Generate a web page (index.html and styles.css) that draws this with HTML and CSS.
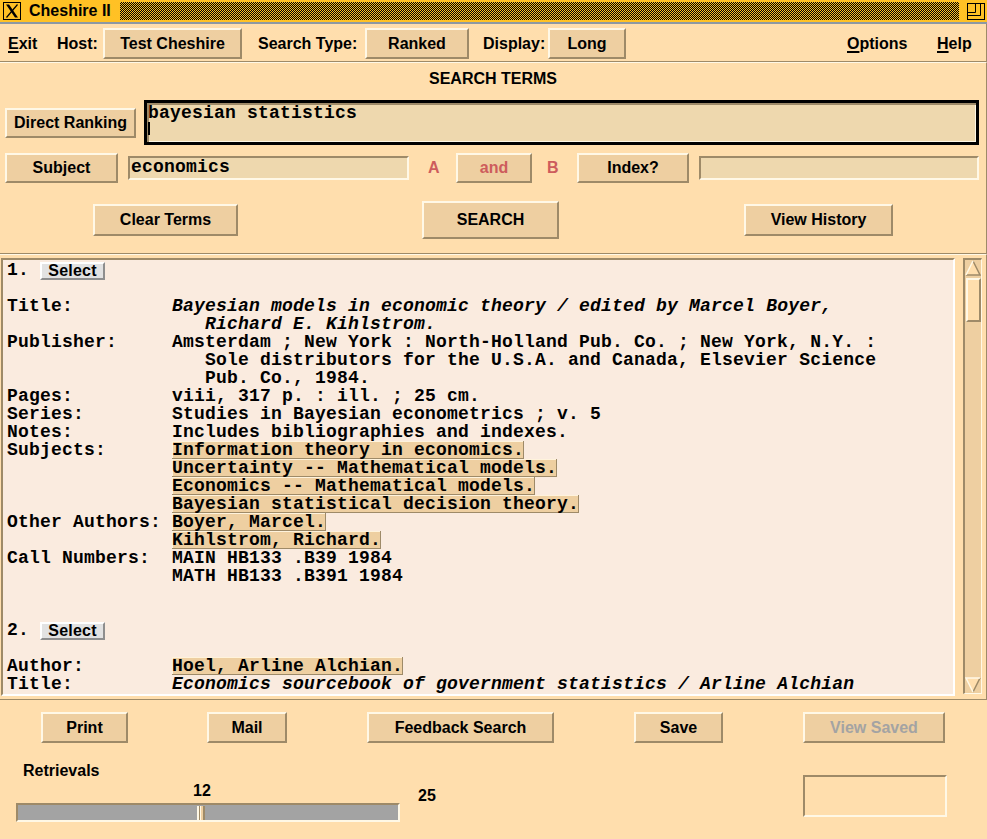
FILE: index.html
```html
<!DOCTYPE html>
<html>
<head>
<meta charset="utf-8">
<title>Cheshire II</title>
<link rel="stylesheet" href="styles.css">
</head>
<body>
<div class="titlebar">
  <svg class="wm-icon" width="18" height="18" viewBox="0 0 18 18">
    <rect x="0.5" y="0.5" width="17" height="17" fill="none" stroke="#000"/>
    <path d="M3 2.5 L6 2.5 L15 15.5 L12 15.5 Z" fill="#000"/>
    <path d="M14.5 2.5 L3.5 15.5" stroke="#000" stroke-width="1.2"/>
  </svg>
  <span class="title">Cheshire II</span>
  <div class="dither"></div>
  <svg class="max-icon" width="18" height="17" viewBox="0 0 18 17">
    <rect x="0.5" y="0.5" width="17" height="16" fill="none" stroke="#000"/>
    <path d="M8.5 0.5 V9.5 H0.5 M13.5 0.5 V12.5 H0.5" fill="none" stroke="#000"/>
  </svg>
</div>

<div class="menubar">
  <span class="m-exit"><u>E</u>xit</span>
  <span class="m-host">Host:</span>
  <button class="btn b-host">Test Cheshire</button>
  <span class="m-stype">Search Type:</span>
  <button class="btn b-ranked">Ranked</button>
  <span class="m-display">Display:</span>
  <button class="btn b-long">Long</button>
  <span class="spacer"></span>
  <span class="m-options"><u>O</u>ptions</span>
  <span class="m-help"><u>H</u>elp</span>
</div>

<div class="search">
  <div class="search-title">SEARCH TERMS</div>
  <div class="row1">
    <button class="btn b-direct">Direct Ranking</button>
    <div class="textarea">
      <div class="ta-line">bayesian statistics</div>
      <div class="cursor"></div>
    </div>
  </div>
  <div class="row2">
    <button class="btn b-subject">Subject</button>
    <div class="entry e-subject">economics</div>
    <span class="lbl-a">A</span>
    <button class="btn b-and">and</button>
    <span class="lbl-b">B</span>
    <button class="btn b-index">Index?</button>
    <div class="entry e-index"></div>
  </div>
  <div class="row3">
    <button class="btn b-clear">Clear Terms</button>
    <button class="btn b-search">SEARCH</button>
    <button class="btn b-history">View History</button>
  </div>
</div>

<div class="results">
  <div class="pane">
    <div class="ln">1. <span class="sel">Select</span></div>
    <div class="ln"> </div>
    <div class="ln">Title:         <span class="it">Bayesian models in economic theory / edited by Marcel Boyer,</span></div>
    <div class="ln">                  <span class="it">Richard E. Kihlstrom.</span></div>
    <div class="ln">Publisher:     Amsterdam ; New York : North-Holland Pub. Co. ; New York, N.Y. :</div>
    <div class="ln">                  Sole distributors for the U.S.A. and Canada, Elsevier Science</div>
    <div class="ln">                  Pub. Co., 1984.</div>
    <div class="ln">Pages:         viii, 317 p. : ill. ; 25 cm.</div>
    <div class="ln">Series:        Studies in Bayesian econometrics ; v. 5</div>
    <div class="ln">Notes:         Includes bibliographies and indexes.</div>
    <div class="ln">Subjects:      <span class="hl">Information theory in economics.</span></div>
    <div class="ln">               <span class="hl">Uncertainty -- Mathematical models.</span></div>
    <div class="ln">               <span class="hl">Economics -- Mathematical models.</span></div>
    <div class="ln">               <span class="hl">Bayesian statistical decision theory.</span></div>
    <div class="ln">Other Authors: <span class="hl">Boyer, Marcel.</span></div>
    <div class="ln">               <span class="hl">Kihlstrom, Richard.</span></div>
    <div class="ln">Call Numbers:  MAIN HB133 .B39 1984</div>
    <div class="ln">               MATH HB133 .B391 1984</div>
    <div class="ln"> </div>
    <div class="ln"> </div>
    <div class="ln">2. <span class="sel">Select</span></div>
    <div class="ln"> </div>
    <div class="ln">Author:        <span class="hl">Hoel, Arline Alchian.</span></div>
    <div class="ln">Title:         <span class="it">Economics sourcebook of government statistics / Arline Alchian</span></div>
  </div>
  <div class="scrollbar">
    <svg class="arrow" width="16" height="16" viewBox="0 0 16 16">
      <path d="M8 1 L15 15 L1 15 Z" fill="#FFDEAD"/>
      <path d="M8 1 L15 15 L1 15" stroke="#9E8A68" stroke-width="1.5" fill="none"/>
      <path d="M8 1 L1 15" stroke="#FFF8E6" stroke-width="1.5" fill="none"/>
    </svg>
    <div class="thumb"></div>
    <div class="sb-space"></div>
    <svg class="arrow" width="16" height="16" viewBox="0 0 16 16">
      <path d="M1 1 L15 1 L8 15 Z" fill="#FFDEAD"/>
      <path d="M15 1 L8 15" stroke="#9E8A68" stroke-width="1.5" fill="none"/>
      <path d="M8 15 L1 1 L15 1" stroke="#FFF8E6" stroke-width="1.5" fill="none"/>
    </svg>
  </div>
</div>

<div class="bottom">
  <div class="brow">
    <button class="btn b-print">Print</button>
    <button class="btn b-mail">Mail</button>
    <button class="btn b-feedback">Feedback Search</button>
    <button class="btn b-save">Save</button>
    <button class="btn b-viewsaved">View Saved</button>
  </div>
  <div class="lower">
    <div class="retrievals">
      <div class="ret-label">Retrievals</div>
      <div class="slider-row">
        <div class="slider-col">
          <div class="slider-val">12</div>
          <div class="trough"><div class="sthumb"></div></div>
        </div>
        <div class="slider-max">25</div>
      </div>
    </div>
    <div class="statbox"></div>
  </div>
</div>
</body>
</html>
```

FILE: styles.css
```css
html, body {
  margin: 0;
  padding: 0;
}
body {
  width: 987px;
  height: 839px;
  overflow: hidden;
  background: #FFDEAD;
  color: #000;
  font-family: "Liberation Sans", Arial, sans-serif;
  font-weight: bold;
  font-size: 16px;
  line-height: 18px;
}

/* title bar */
.titlebar {
  height: 22px;
  background: #FFC125;
  border-bottom: 2px solid #8C98A4;
  display: flex;
  align-items: center;
}
.wm-icon { display: block; margin-left: 3px; }
.title { width: 91px; margin-left: 8px; }
.dither {
  flex: 1;
  height: 18px;
  background-color: #FFC125;
  background-image: repeating-conic-gradient(#000 0% 25%, transparent 0% 50%);
  background-size: 2px 2px;
}
.max-icon { display: block; margin-left: 8px; margin-right: 2px; }

/* generic button */
.btn {
  box-sizing: border-box;
  margin: 0;
  padding: 0;
  background: #EECFA1;
  border: 2px solid;
  border-color: #FFF8E6 #9E8A68 #9E8A68 #FFF8E6;
  font: inherit;
  color: #000;
  text-align: center;
  line-height: 18px;
  white-space: nowrap;
}

/* menubar */
.menubar {
  display: flex;
  align-items: center;
  height: 31px;
  padding: 4px 0 2px;
  border-bottom: 1px solid #9E8A68;
  border-right: 1px solid #9E8A68;
}
.menubar u {
  text-decoration-thickness: 2px;
  text-underline-offset: 2px;
}
.m-exit { margin-left: 8px; width: 49px; }
.m-host { width: 46px; }
.b-host { width: 139px; height: 31px; }
.m-stype { margin-left: 16px; width: 107px; }
.b-ranked { width: 104px; height: 31px; }
.m-display { margin-left: 14px; width: 65px; }
.b-long { width: 78px; height: 31px; }
.spacer { flex: 1; }
.m-options { width: 90px; }
.m-help { width: 49px; }

/* search terms */
.search {
  border-top: 1px solid #FFF8E6;
  border-bottom: 1px solid #9E8A68;
  border-right: 1px solid #9E8A68;
  padding: 7px 0 14px;
}
.search-title { text-align: center; }
.row1 {
  display: flex;
  align-items: center;
  height: 45px;
  margin-top: 12px;
}
.b-direct { margin-left: 5px; width: 131px; height: 30px; }
.textarea {
  box-sizing: border-box;
  margin-left: 8px;
  width: 835px;
  height: 45px;
  border: 3px solid #000;
  background: #EED8AE;
  box-shadow: inset 2px 2px #9E8A68, inset -1px -1px #FFF8E6;
  padding: 1px 1px 0;
}
.ta-line, .entry, .pane {
  font-family: "Liberation Mono", "Courier New", monospace;
  font-weight: bold;
  font-size: 18px;
  letter-spacing: 0.2px;
}
.ta-line { line-height: 18px; }
.cursor {
  width: 2px;
  height: 13px;
  margin-top: 0;
  background: #000;
}
.row2 {
  display: flex;
  align-items: center;
  height: 30px;
  margin-top: 8px;
}
.b-subject { margin-left: 5px; width: 113px; height: 30px; }
.entry {
  box-sizing: border-box;
  height: 24px;
  border: 2px solid;
  border-color: #9E8A68 #FFF8E6 #FFF8E6 #9E8A68;
  background: #EED8AE;
  padding-left: 1px;
  line-height: 19px;
  white-space: pre;
}
.e-subject { margin-left: 10px; width: 281px; }
.lbl-a { margin-left: 19px; width: 28px; color: #CD5C5C; }
.b-and { width: 76px; height: 30px; color: #CD5C5C; line-height: 16px; }
.lbl-b { margin-left: 15px; width: 30px; color: #CD5C5C; }
.b-index { width: 112px; height: 30px; }
.e-index { margin-left: 10px; width: 280px; }
.row3 {
  display: flex;
  align-items: center;
  height: 38px;
  margin-top: 18px;
}
.b-clear { margin-left: 93px; width: 145px; height: 32px; }
.b-search { margin-left: 184px; width: 137px; height: 38px; }
.b-history { margin-left: 185px; width: 149px; height: 32px; }

/* results */
.results {
  display: flex;
  align-items: flex-start;
  border-top: 1px solid #FFF8E6;
  border-bottom: 1px solid #9E8A68;
  border-right: 1px solid #9E8A68;
  padding: 3px 0 3px 1px;
}
.pane {
  box-sizing: border-box;
  width: 954px;
  height: 438px;
  overflow: hidden;
  background: #FAEBDF;
  border: 2px solid;
  border-color: #9E8A68 #FFFFFF #FFFFFF #9E8A68;
  padding: 1px 0 0 4px;
  line-height: 18px;
}
.ln { height: 18px; white-space: pre; }
.it { font-style: italic; }
.hl {
  display: inline-block;
  vertical-align: top;
  height: 18px;
  background: #EECFA1;
  box-shadow: inset -1px -1px #9E8A68, inset 1px 1px #FFF3DC;
}
.sel {
  display: inline-block;
  vertical-align: top;
  box-sizing: border-box;
  margin-top: 1px;
  width: 65px;
  height: 18px;
  background: #E2E2E2;
  border: 2px solid;
  border-color: #FFFFFF #8E8E8E #8E8E8E #FFFFFF;
  font-family: "Liberation Sans", Arial, sans-serif;
  font-style: normal;
  font-size: 16px;
  letter-spacing: 0.2px;
  line-height: 14px;
  text-align: center;
}
.scrollbar {
  box-sizing: border-box;
  margin-left: 8px;
  width: 19px;
  height: 436px;
  background: #EECFA1;
  border: 2px solid;
  border-width: 2px 1px 1px 2px;
  border-color: #9E8A68 #FFF8E6 #FFF8E6 #9E8A68;
  display: flex;
  flex-direction: column;
}
.arrow { display: block; }
.thumb {
  box-sizing: border-box;
  margin: 2px 0 0 1px;
  width: 15px;
  height: 44px;
  background: #FFDEAD;
  border: 2px solid;
  border-color: #FFF8E6 #9E8A68 #9E8A68 #FFF8E6;
}
.sb-space { flex: 1; }

/* bottom */
.bottom { padding-top: 12px; }
.brow {
  display: flex;
  height: 31px;
}
.brow .btn { height: 31px; }
.b-print { margin-left: 41px; width: 87px; }
.b-mail { margin-left: 79px; width: 80px; }
.b-feedback { margin-left: 80px; width: 187px; }
.b-save { margin-left: 80px; width: 89px; }
.b-viewsaved { margin-left: 80px; width: 142px; color: #A3A3A3; }
.lower {
  display: flex;
  margin-top: 19px;
}
.retrievals { margin-left: 16px; width: 420px; }
.ret-label { padding-left: 7px; }
.slider-row {
  display: flex;
  margin-top: 2px;
}
.slider-col { width: 384px; }
.slider-val { padding-left: 177px; }
.trough {
  box-sizing: border-box;
  margin-top: 3px;
  height: 19px;
  background: #A3A3A3;
  border: 2px solid;
  border-color: #9E8A68 #FFF8E6 #FFF8E6 #9E8A68;
  display: flex;
  align-items: center;
  padding-left: 179px;
}
.sthumb {
  box-sizing: border-box;
  width: 8px;
  height: 14px;
  background: linear-gradient(to right, #FFF8E6 0 2px, #9E8A68 2px 3px, #FFF8E6 3px 4px, #EECFA1 4px 6px, #9E8A68 6px 8px);
}
.slider-max { margin-left: 18px; margin-top: 5px; }
.statbox {
  box-sizing: border-box;
  margin-left: 367px;
  margin-top: 13px;
  width: 144px;
  height: 42px;
  border: 2px solid;
  border-color: #9E8A68 #FFF8E6 #FFF8E6 #9E8A68;
}
```
